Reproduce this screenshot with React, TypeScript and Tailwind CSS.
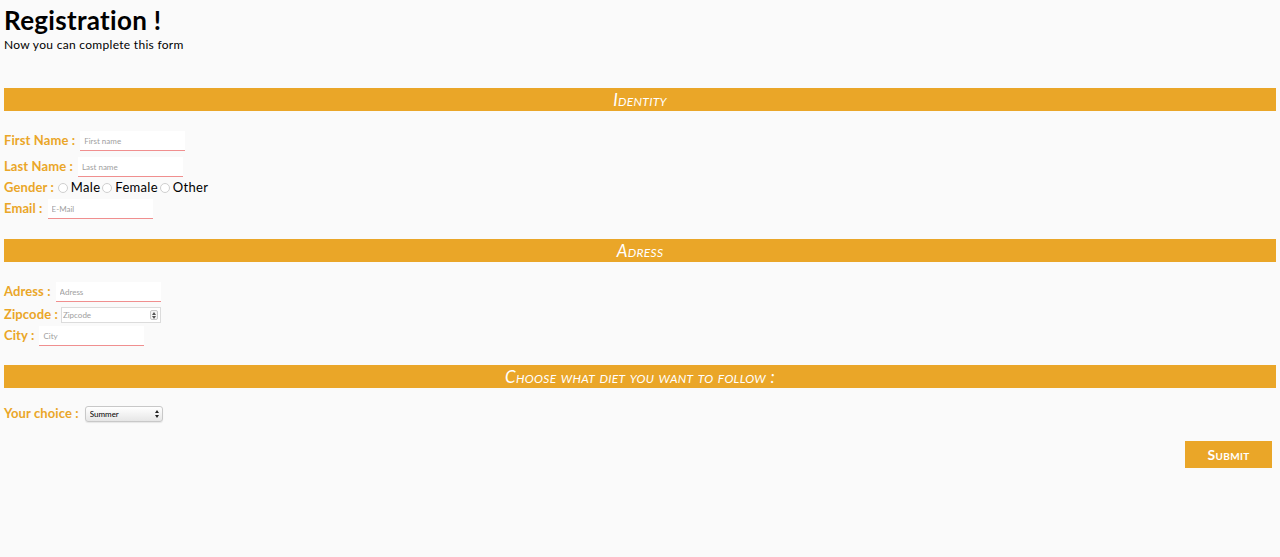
import { useState } from 'react';

const FONT = { fontFamily: 'Lato, "Open Sans", sans-serif' };

function SectionBar({ title, className = '' }: { title: string; className?: string }) {
  return (
    <div className={`h-[23px] bg-[#eaa628] flex items-center justify-center ${className}`}>
      <span className="text-white italic text-[17px] leading-none [font-variant:small-caps] tracking-[0.3px]">
        {title}
      </span>
    </div>
  );
}

function TextField({ placeholder, type = 'text' }: { placeholder: string; type?: string }) {
  return (
    <input
      type={type}
      placeholder={placeholder}
      className="w-[105px] h-[20px] bg-white border-0 border-b border-[#f08f8f] px-[4px] text-[8px] text-gray-700
        placeholder:text-[#a0a0a0] outline-none"
    />
  );
}

function Label({ children }: { children: React.ReactNode }) {
  return <span className="text-[#eaa628] font-bold text-[13px] mr-[5px] tracking-[0.1px]">{children}</span>;
}

export default function App() {
  const [gender, setGender] = useState('');
  return (
    <div className="min-h-[557px] bg-[#fafafa] px-[4px] text-black" style={FONT}>
      {/* ── Header ── */}
      <h1 className="text-[26px] font-bold leading-[30px] pt-[5px] tracking-[0.3px]">Registration !</h1>
      <p className="text-[12px] leading-[16px] mt-[2px] tracking-[0.3px]">Now you can complete this form</p>

      {/* ── Identity ── */}
      <SectionBar title="Identity" className="mt-[35px]" />
      <div className="mt-[20px] space-y-[6px]">
        <div className="flex items-center h-[20px]">
          <Label>First Name :</Label>
          <TextField placeholder="First name" />
        </div>
        <div className="flex items-center h-[20px]">
          <Label>Last Name :</Label>
          <TextField placeholder="Last name" />
        </div>
      </div>
      <div className="flex items-center h-[16px] mt-[3px]">
        <Label>Gender :</Label>
        {['Male', 'Female', 'Other'].map((g) => (
          <label key={g} className="flex items-center text-[13px] mr-[3px] -ml-[2px] tracking-[0.3px]">
            <input
              type="radio"
              name="gender"
              checked={gender === g}
              onChange={() => setGender(g)}
              className="appearance-none w-[10px] h-[10px] rounded-full border border-[#cfcfcf] bg-white ml-[1px] mr-[3px]"
            />
            {g}
          </label>
        ))}
      </div>
      <div className="flex items-center h-[20px] mt-[3px]">
        <Label>Email :</Label>
        <TextField placeholder="E-Mail" type="email" />
      </div>

      {/* ── Adress ── */}
      <SectionBar title="Adress" className="mt-[20px]" />
      <div className="flex items-center h-[20px] mt-[20px]">
        <Label>Adress :</Label>
        <TextField placeholder="Adress" />
      </div>
      <div className="flex items-center h-[16px] mt-[5px]">
        <Label>Zipcode :</Label>
        <div className="-ml-[2px] w-[100px] h-[16px] bg-white border border-[#dcdcdc] flex items-center justify-between pl-[1px] pr-[2px]">
          <input
            type="text"
            placeholder="Zipcode"
            className="w-[80px] text-[8px] placeholder:text-[#a0a0a0] outline-none bg-transparent"
          />
          <div className="w-[8px] h-[10px] rounded-[2px] border border-[#c8c8c8] bg-[#f4f4f4] flex flex-col items-center justify-center gap-[1px]">
            <svg width="4" height="3" viewBox="0 0 4 3"><path d="M0 3 L2 0 L4 3 Z" fill="#555" /></svg>
            <svg width="4" height="3" viewBox="0 0 4 3"><path d="M0 0 L2 3 L4 0 Z" fill="#555" /></svg>
          </div>
        </div>
      </div>
      <div className="flex items-center h-[20px] mt-[3px]">
        <Label>City :</Label>
        <TextField placeholder="City" />
      </div>

      {/* ── Diet ── */}
      <SectionBar title="Choose what diet you want to follow :" className="mt-[19px]" />
      <div className="flex items-center h-[16px] mt-[18px]">
        <Label>Your choice :</Label>
        <div className="relative w-[78px] h-[16px] ml-[1px]">
          <select
            className="block appearance-none w-full h-[16px] py-0 leading-[14px] rounded-[3px] border border-[#c8c8c8]
              bg-gradient-to-b from-white to-[#e6e6e6] text-[8px] pl-[4px] outline-none shadow-[0_1px_1px_rgba(0,0,0,0.08)]"
            defaultValue="Summer"
          >
            <option>Summer</option>
            <option>Winter</option>
          </select>
          <svg className="absolute right-[4px] top-[4px] pointer-events-none" width="4" height="8" viewBox="0 0 4 8">
            <path d="M0 3 L2 0 L4 3 Z M0 5 L2 8 L4 5 Z" fill="#222" />
          </svg>
        </div>
      </div>

      {/* ── Submit ── */}
      <div className="flex justify-end mt-[19px] mr-[4px]">
        <button className="w-[87px] h-[27px] bg-[#eaa628] text-white font-bold text-[14px] [font-variant:small-caps] tracking-[0.3px]">
          Submit
        </button>
      </div>
    </div>
  );
}
